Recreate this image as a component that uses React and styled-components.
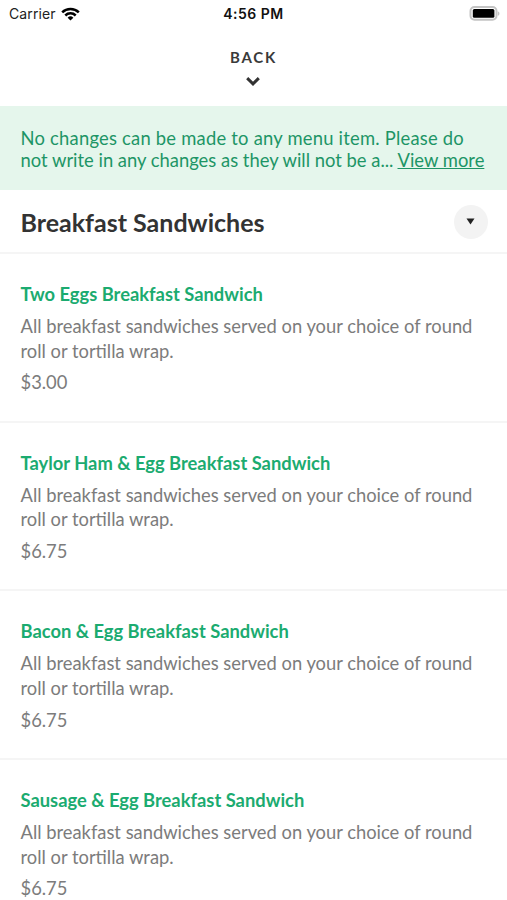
import styled, { createGlobalStyle } from "styled-components";

const GlobalStyle = createGlobalStyle`
    * {
        box-sizing: border-box;
    }

    body {
        margin: 0;
        background: #fff;
        font-family: Lato, "Liberation Sans", sans-serif;
    }
`;

const Screen = styled.div`
    width: 507px;
    height: 900px;
    overflow: hidden;
    background: #fff;
`;

/* status bar */

const StatusBar = styled.div`
    display: grid;
    grid-template-columns: 1fr auto 1fr;
    align-items: center;
    height: 27px;
    padding: 0 7px 0 9px;
    font-family: Inter, sans-serif;
    font-size: 14px;
    color: #222;
`;

const Carrier = styled.div`
    display: flex;
    align-items: center;
    gap: 5px;
    letter-spacing: 0.1px;
`;

const Clock = styled.div`
    margin-right: 2px;
    font-weight: 600;
    letter-spacing: 0.5px;
    color: #111;
`;

const BatteryIcon = styled.svg`
    justify-self: end;
`;

/* header */

const BackButton = styled.button`
    display: flex;
    flex-direction: column;
    align-items: center;
    width: 100%;
    height: 79px;
    padding: 20px 0 0;
    border: none;
    background: none;
    font-family: inherit;
    font-size: 15px;
    font-weight: 700;
    line-height: 20px;
    letter-spacing: 1.8px;
    color: #3a3a3a;

    svg {
        margin: 10px 1px 0 0;
    }
`;

const Notice = styled.div`
    height: 84px;
    padding: 21px 20px 0 20.5px;
    background: #e5f6ec;
    color: #1d9566;
    font-size: 18.4px;
    line-height: 22px;
`;

const NoticeLine = styled.div`
    white-space: nowrap;
    letter-spacing: ${(props) => props.$spacing || "0"};
`;

const ViewMore = styled.a`
    text-decoration: underline;
`;

const SectionHeader = styled.div`
    display: flex;
    align-items: center;
    justify-content: space-between;
    height: 62px;
    padding: 2px 19.5px 0 20.5px;
`;

const Title = styled.h2`
    margin: 0;
    font-size: 25px;
    font-weight: 700;
    color: #333;
`;

const ToggleButton = styled.button`
    display: flex;
    align-items: center;
    justify-content: center;
    width: 34px;
    height: 34px;
    margin-bottom: 1px;
    padding: 0;
    border: none;
    border-radius: 50%;
    background: #f3f3f3;
`;

/* menu items */

const List = styled.ul`
    list-style: none;
    margin: 0;
    padding: 0;
`;

const Item = styled.li`
    height: 168.6px;
    padding: 28.2px 21px 0 20.5px;
    border-top: 2px solid #f5f5f5;
`;

const ItemName = styled.h3`
    margin: 0 0 8px;
    font-size: 18.35px;
    font-weight: 700;
    line-height: 24px;
    color: #1bab70;
`;

const Description = styled.p`
    margin: 0 0 7px;
    font-size: 18.35px;
    line-height: 24.6px;
    color: #7c7c7c;
`;

const Price = styled.div`
    font-size: 18.35px;
    line-height: 24px;
    color: #7c7c7c;
`;

const items = [
    { id: 1, name: "Two Eggs Breakfast Sandwich", price: "$3.00" },
    { id: 2, name: "Taylor Ham & Egg Breakfast Sandwich", price: "$6.75" },
    { id: 3, name: "Bacon & Egg Breakfast Sandwich", price: "$6.75" },
    { id: 4, name: "Sausage & Egg Breakfast Sandwich", price: "$6.75" },
];

function App() {
    return (
        <Screen>
            <GlobalStyle />
            <StatusBar>
                <Carrier>
                    Carrier
                    <svg width="19" height="14" viewBox="0 0 19 14" fill="none" stroke="#000" strokeWidth="2.5">
                        <path d="M1.2 5.3a11.8 11.8 0 0 1 16.6 0" />
                        <path d="M4.3 8.5a7.4 7.4 0 0 1 10.4 0" />
                        <path d="M9.5 13.6l-2.9-2.9a4.1 4.1 0 0 1 5.8 0z" fill="#000" stroke="none" />
                    </svg>
                </Carrier>
                <Clock>4:56 PM</Clock>
                <BatteryIcon width="31" height="15" viewBox="0 0 31 15">
                    <rect x="1.5" y="1" width="26" height="12.8" rx="4" fill="#fff" stroke="#c4c4c4" strokeWidth="2" />
                    <rect x="3.8" y="3" width="21.6" height="8.8" rx="1.5" fill="#000" />
                    <path d="M28.8 5.2c2.2.8 2.2 3.8 0 4.6z" fill="#c4c4c4" />
                </BatteryIcon>
            </StatusBar>

            <BackButton>
                BACK
                <svg width="14" height="9" viewBox="0 0 14 9" fill="none" stroke="#333" strokeWidth="3">
                    <path d="M1.2 1.2L7 6.8l5.8-5.6" />
                </svg>
            </BackButton>

            <Notice>
                <NoticeLine $spacing="0.22px">No changes can be made to any menu item. Please do</NoticeLine>
                <NoticeLine>
                    not write in any changes as they will not be a... <ViewMore>View more</ViewMore>
                </NoticeLine>
            </Notice>

            <SectionHeader>
                <Title>Breakfast Sandwiches</Title>
                <ToggleButton>
                    <svg width="9" height="7" viewBox="0 0 9 7">
                        <path d="M0.5 0.5h8l-4 6z" fill="#222" />
                    </svg>
                </ToggleButton>
            </SectionHeader>

            <List>
                {items.map((item) => (
                    <Item key={item.id}>
                        <ItemName>{item.name}</ItemName>
                        <Description>
                            All breakfast sandwiches served on your choice of round roll or tortilla wrap.
                        </Description>
                        <Price>{item.price}</Price>
                    </Item>
                ))}
            </List>
        </Screen>
    );
}

export default App;
